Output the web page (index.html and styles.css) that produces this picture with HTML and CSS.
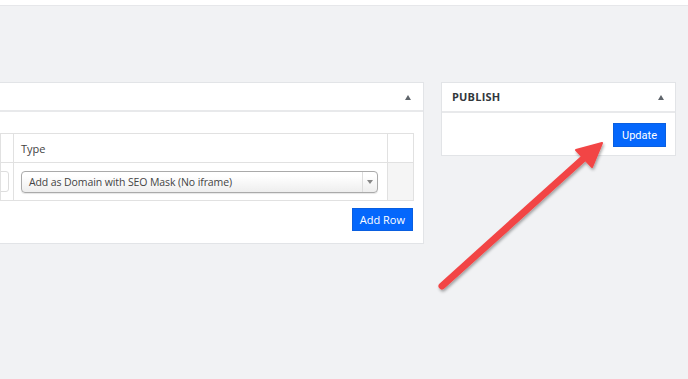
FILE: index.html
```html
<!DOCTYPE html>
<html lang="en">
<head>
    <meta charset="UTF-8">
    <meta name="viewport" content="width=device-width, initial-scale=1.0">
    <title>Edit Domain</title>
    <link rel="stylesheet" href="styles.css">
</head>
<body>
    <div class="topbar"></div>

    <div class="wrap">
        <div class="postbox main-box">
            <div class="box-head">
                <span class="box-title"></span>
                <span class="toggle"></span>
            </div>
            <div class="box-body">
                <table class="rows">
                    <tr class="head-row">
                        <th class="col-first"></th>
                        <th class="col-type">Type</th>
                        <th class="col-actions"></th>
                    </tr>
                    <tr>
                        <td class="col-first"><input type="text" class="cut-input"></td>
                        <td class="col-type">
                            <div class="fake-select">
                                <span class="sel-text">Add as Domain with SEO Mask (No iframe)</span>
                                <span class="sel-arrow"><b></b></span>
                            </div>
                        </td>
                        <td class="col-actions shaded"></td>
                    </tr>
                </table>
                <div class="row-actions">
                    <button class="btn">Add Row</button>
                </div>
            </div>
        </div>

        <div class="postbox side-box">
            <div class="box-head">
                <span class="box-title">PUBLISH</span>
                <span class="toggle"></span>
            </div>
            <div class="box-body publish-body">
                <button class="btn btn-update">Update</button>
            </div>
        </div>
    </div>

    <!-- annotation arrow drawn over the page -->
    <svg class="arrow" width="688" height="379" viewBox="0 0 688 379">
        <defs>
            <filter id="shadow" x="-20%" y="-20%" width="140%" height="140%">
                <feDropShadow dx="1" dy="2" stdDeviation="1.5" flood-color="#000" flood-opacity="0.35"/>
            </filter>
        </defs>
        <g filter="url(#shadow)" fill="#f24545" stroke="#f24545">
            <line x1="442" y1="286" x2="584" y2="158" stroke-width="7" stroke-linecap="round"/>
            <polygon points="602,143 576,150 592,167" stroke-width="2" stroke-linejoin="round"/>
        </g>
    </svg>
</body>
</html>
```

FILE: styles.css
```css
body {
    margin: 0;
    font-family: "Open Sans", Arial, sans-serif;
    font-size: 11px;
    color: #444;
    background: #f1f2f4;
    overflow: hidden;
}

.topbar {
    height: 5px;
    background: #fff;
    border-bottom: 1px solid #e6e7ea;
}

.wrap {
    display: flex;
    align-items: flex-start;
    gap: 17px;
    padding-top: 76px;
}

.postbox {
    background: #fff;
    border: 1px solid #e2e4e7;
}

.main-box {
    width: 423px;
    border-left: none;
}

.side-box {
    width: 233px;
}

.box-head {
    height: 28px;
    display: flex;
    align-items: center;
    justify-content: space-between;
    padding: 0 11px 0 10px;
    border-bottom: 2px solid #e8e9eb;
}

.main-box .box-head {
    height: 27px;
}

.box-title {
    font-size: 11px;
    font-weight: bold;
    color: #32373c;
    letter-spacing: 0.2px;
    margin-top: -2px;
}

.toggle {
    width: 0;
    height: 0;
    border-left: 3px solid transparent;
    border-right: 3px solid transparent;
    border-bottom: 5px solid #5f656b;
    margin-top: 1px;
}

.main-box .toggle {
    margin-right: 1px;
}

.box-body {
    padding: 21px 10px 12px 0;
}

.rows {
    width: 414px;
    border-collapse: collapse;
    border: 1px solid #e1e1e1;
}

.rows th,
.rows td {
    border: 1px solid #e1e1e1;
    padding: 0;
    text-align: left;
}

.head-row th {
    height: 28px;
    font-weight: normal;
    color: #444;
}

.rows td {
    height: 37px;
}

.col-first {
    width: 12px;
    overflow: hidden;
}

.col-type {
    padding-left: 7px !important;
}

.col-actions {
    width: 25px;
}

.shaded {
    background: #f5f5f5;
}

.cut-input {
    display: block;
    width: 40px;
    height: 19px;
    margin-left: -34px;
    padding: 0;
    border: 1px solid #ddd;
    border-radius: 3px;
}

.fake-select {
    width: 355px;
    height: 20px;
    display: flex;
    align-items: center;
    justify-content: space-between;
    border: 1px solid #aaa;
    border-radius: 4px;
    background: linear-gradient(#fff 20%, #eee 100%);
    box-shadow: 0 1px 1px rgba(0,0,0,0.1);
}

.sel-text {
    padding-left: 7px;
    color: #444;
    font-size: 10.5px;
    letter-spacing: -0.1px;
    white-space: nowrap;
}

.sel-arrow {
    width: 14px;
    height: 20px;
    border-left: 1px solid #ddd;
    display: flex;
    align-items: center;
    justify-content: center;
}

.sel-arrow b {
    width: 0;
    height: 0;
    border-left: 3px solid transparent;
    border-right: 3px solid transparent;
    border-top: 4px solid #888;
}

.row-actions {
    display: flex;
    justify-content: flex-end;
    margin-top: 7px;
}

.btn {
    background: #0467fc;
    color: white;
    border: 1px solid #0a5fe0;
    font-family: "Open Sans", Arial, sans-serif;
    font-size: 11px;
    height: 23px;
    padding: 0 7px;
    cursor: pointer;
}

.btn:hover {
    background-color: #0b5ed7;
}

.publish-body {
    display: flex;
    justify-content: flex-end;
    padding: 10px 9px 8px 0;
}

.btn-update {
    height: 24px;
    padding: 0 8px;
    font-family: Roboto, Arial, sans-serif;
}

.arrow {
    position: absolute;
    left: 0;
    top: 0;
    pointer-events: none;
}
```
